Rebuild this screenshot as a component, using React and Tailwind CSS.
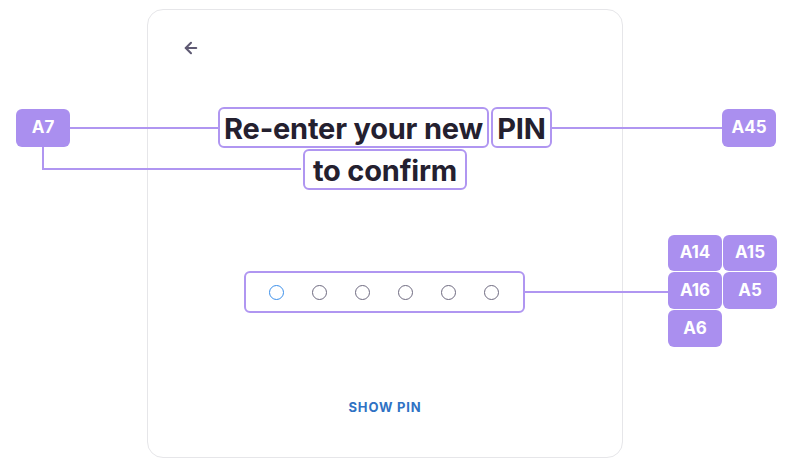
import React from 'react';
import { ArrowLeft } from 'lucide-react';

function Badge({ label, className = '' }) {
  return (
    <div className={`flex items-center justify-center rounded-md bg-[#aa8fef] text-white font-bold text-[17px] w-[54px] ${className}`}>
      {label}
    </div>
  );
}

export default function App() {
  const dots = [0, 1, 2, 3, 4, 5];

  return (
    <div className="relative w-[794px] h-[474px] bg-white overflow-hidden font-['Inter',sans-serif]">
      {/* CARD */}
      <div className="ml-[147px] mt-[9px] w-[476px] h-[449px] rounded-2xl border border-[#e6e6e9] flex flex-col items-center">
        <button className="self-start ml-[34px] mt-[29px] text-[#5f5a73]">
          <ArrowLeft size={18} strokeWidth={2.75} />
        </button>

        <h1 className="mt-[50px] text-center text-[29px] leading-[41px] font-bold text-[#24202f] tracking-[-0.2px]">
          <div className="flex justify-center gap-[2px]">
            <span className="border-2 border-[#b096f1] rounded-md w-[271px] h-[41px] flex items-center justify-center pt-[2px]">Re-enter your new</span>
            <span className="border-2 border-[#b096f1] rounded-md w-[61px] h-[41px] flex items-center justify-center pt-[2px]">PIN</span>
          </div>
          <div className="flex justify-center mt-px">
            <span className="border-2 border-[#b096f1] rounded-md w-[164px] h-[41px] flex items-center justify-center pt-[2px]">to confirm</span>
          </div>
        </h1>

        {/* PIN INPUT */}
        <div className="mt-[81px] ml-[-2px] w-[281px] h-[42px] border-2 border-[#b096f1] rounded-md flex items-center justify-center gap-[28px]">
          {dots.map(i => (
            <span
              key={i}
              className={`w-[15px] h-[15px] rounded-full border ${i === 0 ? 'border-[#3b8fea]' : 'border-[#6e6a80]'}`}
            />
          ))}
        </div>

        <button className="mt-[85px] text-[13px] font-bold tracking-[0.8px] text-[#2f72c4]">SHOW PIN</button>
      </div>

      {/* ANNOTATIONS */}
      <div className="absolute left-[70px] top-[127px] w-[148px] border-t-2 border-[#b096f1]" />
      <div className="absolute left-[42px] top-[146px] w-[259px] h-[24px] border-l-2 border-b-2 border-[#b096f1]" />
      <div className="absolute left-[551px] top-[127px] w-[172px] border-t-2 border-[#b096f1]" />
      <div className="absolute left-[524px] top-[291px] w-[145px] border-t-2 border-[#b096f1]" />

      <Badge label="A7" className="absolute left-[16px] top-[109px] h-[38px]" />
      <Badge label="A45" className="absolute left-[722px] top-[109px] h-[38px]" />

      <div className="absolute left-[668px] top-[235px] grid grid-cols-[54px_54px] gap-x-[1px] gap-y-[1px]">
        <Badge label="A14" className="h-[36px]" />
        <Badge label="A15" className="h-[36px]" />
        <Badge label="A16" className="h-[37px]" />
        <Badge label="A5" className="h-[37px]" />
        <Badge label="A6" className="h-[37px]" />
      </div>
    </div>
  );
}
